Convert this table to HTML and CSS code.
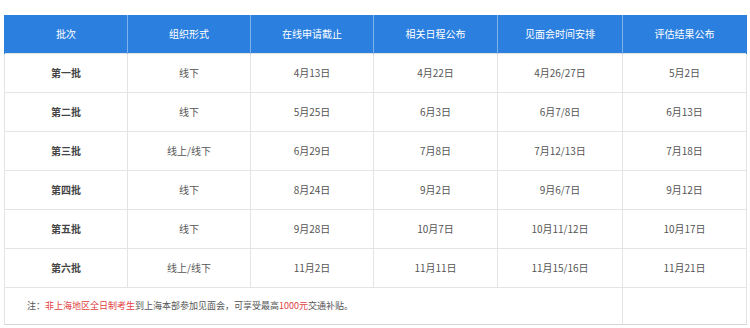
FILE: index.html
```html
<!DOCTYPE html>
<html lang="zh">
<head>
<meta charset="utf-8">
<link rel="stylesheet" href="styles.css">
</head>
<body>
<table class="sched">
  <colgroup>
    <col class="c1"><col class="c2"><col class="c3"><col class="c4"><col class="c5"><col class="c6">
  </colgroup>
  <thead>
    <tr>
      <th>批次</th><th>组织形式</th><th>在线申请截止</th><th>相关日程公布</th><th>见面会时间安排</th><th>评估结果公布</th>
    </tr>
  </thead>
  <tbody>
    <tr><td class="b">第一批</td><td>线下</td><td>4月13日</td><td>4月22日</td><td>4月26/27日</td><td>5月2日</td></tr>
    <tr><td class="b">第二批</td><td>线下</td><td>5月25日</td><td>6月3日</td><td>6月7/8日</td><td>6月13日</td></tr>
    <tr><td class="b">第三批</td><td>线上/线下</td><td>6月29日</td><td>7月8日</td><td>7月12/13日</td><td>7月18日</td></tr>
    <tr><td class="b">第四批</td><td>线下</td><td>8月24日</td><td>9月2日</td><td>9月6/7日</td><td>9月12日</td></tr>
    <tr><td class="b">第五批</td><td>线下</td><td>9月28日</td><td>10月7日</td><td>10月11/12日</td><td>10月17日</td></tr>
    <tr><td class="b">第六批</td><td>线上/线下</td><td>11月2日</td><td>11月11日</td><td>11月15/16日</td><td>11月21日</td></tr>
    <tr class="note"><td colspan="5">注：<span class="red">非上海地区全日制考生</span>到上海本部参加见面会，可享受最高<span class="red">1000元</span>交通补贴。</td><td></td></tr>
  </tbody>
</table>
</body>
</html>
```
FILE: styles.css
```css
html, body {
  margin: 0;
  padding: 0;
  background: #ffffff;
}
body {
  padding: 15px 0 0 4px;
  font-family: "Noto Sans CJK SC", "Noto Sans", sans-serif;
}
.sched {
  width: 742px;
  border-collapse: collapse;
  table-layout: fixed;
  font-size: 10px;
  color: #555555;
}
.c1, .c2, .c3 { width: 123px; }
.c4, .c6 { width: 124px; }
.c5 { width: 125px; }
.sched th {
  background: #2b80df;
  color: #ffffff;
  font-weight: normal;
  height: 38px;
  padding: 0;
  text-align: center;
  border-left: 1px solid #7fb2ec;
  border-right: 1px solid #7fb2ec;
  box-sizing: border-box;
}
.sched th:first-child { border-left-color: #2b80df; }
.sched th:last-child { border-right-color: #2b80df; }
.sched td {
  height: 39px;
  padding: 0;
  text-align: center;
  border: 1px solid #e4e4e4;
  box-sizing: border-box;
}
.sched td.b {
  font-weight: bold;
  color: #444444;
}
.sched .note td {
  height: 37px;
  text-align: left;
  padding-left: 22px;
  font-size: 9px;
  color: #555555;
  border-bottom-color: #d6d6d6;
}
.red { color: #e2403f; }
```
